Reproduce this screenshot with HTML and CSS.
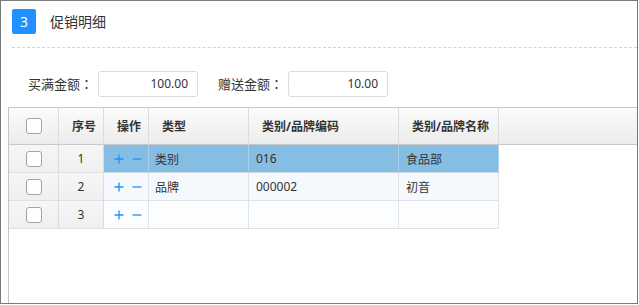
FILE: index.html
```html
<!DOCTYPE html>
<html lang="zh">
<head>
<meta charset="utf-8">
<title>促销明细</title>
<link rel="stylesheet" href="styles.css">
</head>
<body>
<div class="frame">
  <div class="title">
    <span class="badge">3</span>
    <span class="title-text">促销明细</span>
  </div>
  <div class="form">
    <label class="label">买满金额<span class="colon" lang="zh-TW">：</span></label>
    <div class="input">100.00</div>
    <label class="label label-2">赠送金额<span class="colon" lang="zh-TW">：</span></label>
    <div class="input">10.00</div>
  </div>
  <div class="grid">
    <div class="row head">
      <div class="cell c-chk"><span class="chk"></span></div>
      <div class="cell c-seq">序号</div>
      <div class="cell c-op">操作</div>
      <div class="cell c-type">类型</div>
      <div class="cell c-code">类别/品牌编码</div>
      <div class="cell c-name">类别/品牌名称</div>
      <div class="cell c-fill"></div>
    </div>
    <div class="row body selected">
      <div class="cell c-chk fixed"><span class="chk"></span></div>
      <div class="cell c-seq fixed">1</div>
      <div class="cell c-op"><span class="ops"><svg class="ic" width="10" height="10" viewBox="0 0 10 10"><path d="M5 0.5V9.5M0.5 5H9.5"/></svg><svg class="ic" width="10" height="10" viewBox="0 0 10 10"><path d="M0.5 5H9.5"/></svg></span></div>
      <div class="cell c-type">类别</div>
      <div class="cell c-code">016</div>
      <div class="cell c-name">食品部</div>
    </div>
    <div class="row body alt">
      <div class="cell c-chk fixed"><span class="chk"></span></div>
      <div class="cell c-seq fixed">2</div>
      <div class="cell c-op"><span class="ops"><svg class="ic" width="10" height="10" viewBox="0 0 10 10"><path d="M5 0.5V9.5M0.5 5H9.5"/></svg><svg class="ic" width="10" height="10" viewBox="0 0 10 10"><path d="M0.5 5H9.5"/></svg></span></div>
      <div class="cell c-type">品牌</div>
      <div class="cell c-code">000002</div>
      <div class="cell c-name">初音</div>
    </div>
    <div class="row body">
      <div class="cell c-chk fixed"><span class="chk"></span></div>
      <div class="cell c-seq fixed">3</div>
      <div class="cell c-op"><span class="ops"><svg class="ic" width="10" height="10" viewBox="0 0 10 10"><path d="M5 0.5V9.5M0.5 5H9.5"/></svg><svg class="ic" width="10" height="10" viewBox="0 0 10 10"><path d="M0.5 5H9.5"/></svg></span></div>
      <div class="cell c-type"></div>
      <div class="cell c-code"></div>
      <div class="cell c-name"></div>
    </div>
  </div>
</div>
</body>
</html>
```
FILE: styles.css
```css
* { box-sizing: border-box; }
html, body { margin: 0; padding: 0; background: #fff; }
body {
  font-family: "Noto Sans", "Noto Sans CJK SC", sans-serif;
  font-size: 12px;
  color: #333;
}
.frame {
  width: 638px;
  height: 304px;
  border: 1px solid #7a7a7a;
  display: flex;
  flex-direction: column;
  overflow: hidden;
}
.title {
  margin-left: 11px;
  height: 47px;
  padding-top: 8px;
  border-bottom: 1px dashed #d4d4d4;
  display: flex;
  align-items: flex-start;
}
.badge {
  width: 24px;
  height: 25px;
  border-radius: 2px;
  background: #1e90ff;
  color: #fff;
  font-size: 14px;
  line-height: 25px;
  text-align: center;
}
.title-text {
  margin-left: 14px;
  font-size: 14px;
  line-height: 25px;
  color: #333;
}
.form {
  display: flex;
  align-items: center;
  padding: 23px 0 10px 27px;
}
.label {
  font-size: 13px;
  color: #333;
  margin-right: 5px;
  line-height: 26px;
}
.colon { font-family: "Noto Sans CJK TC", sans-serif; }
.label-2 { margin-left: 20px; }
.input {
  width: 100px;
  height: 26px;
  border: 1px solid #dcdcdc;
  border-radius: 3px;
  text-align: right;
  padding-right: 9px;
  line-height: 24px;
  font-size: 12px;
  color: #333;
}
.grid {
  flex: 1;
  margin-left: 7px;
  border-left: 1px solid #c4c4c4;
  border-top: 1px solid #c4c8ce;
}
.row { display: flex; }
.cell {
  flex: none;
  border-right: 1px solid #e0e3e8;
  border-bottom: 1px solid #dde1e6;
  display: flex;
  align-items: center;
  white-space: nowrap;
}
.head .cell {
  height: 37px;
  background: linear-gradient(#fbfbfb, #ececec);
  border-right-color: #dcdcdc;
  border-bottom-color: #c8c8c8;
  font-weight: bold;
  padding-left: 13px;
}
.head .c-fill { flex: 1; border-right: 0; }
.body .cell { height: 28px; padding-left: 6px; }
.c-chk { width: 50px; }
.head .c-chk, .body .c-chk { padding-left: 1px; justify-content: center; }
.c-seq { width: 45px; }
.body .c-seq { justify-content: center; padding-left: 0; }
.c-op { width: 45px; }
.body .c-op { padding-left: 10px; }
.c-type { width: 100px; }
.c-code { width: 150px; }
.c-name { width: 100px; }
.body .cell.c-code, .body .cell.c-name { padding-left: 7px; }
.body .cell { background: #fcfdff; }
.alt .cell { background: #f5f9fe; }
.selected .cell { background: #86bde3; border-right-color: #a9cfe9; border-bottom-color: #cfdde9; }
.body .cell.fixed {
  background: linear-gradient(#f6f6f6, #efefef);
  border-right-color: #dcdcdc;
  border-bottom-color: #e0e0e0;
}
.chk {
  width: 16px;
  height: 16px;
  border: 1px solid #a4a4a4;
  border-radius: 3px;
  background: #fff;
}
.ops { display: flex; gap: 8px; align-items: center; }
.ic { stroke: #1e90ff; stroke-width: 1.3; fill: none; }
```
